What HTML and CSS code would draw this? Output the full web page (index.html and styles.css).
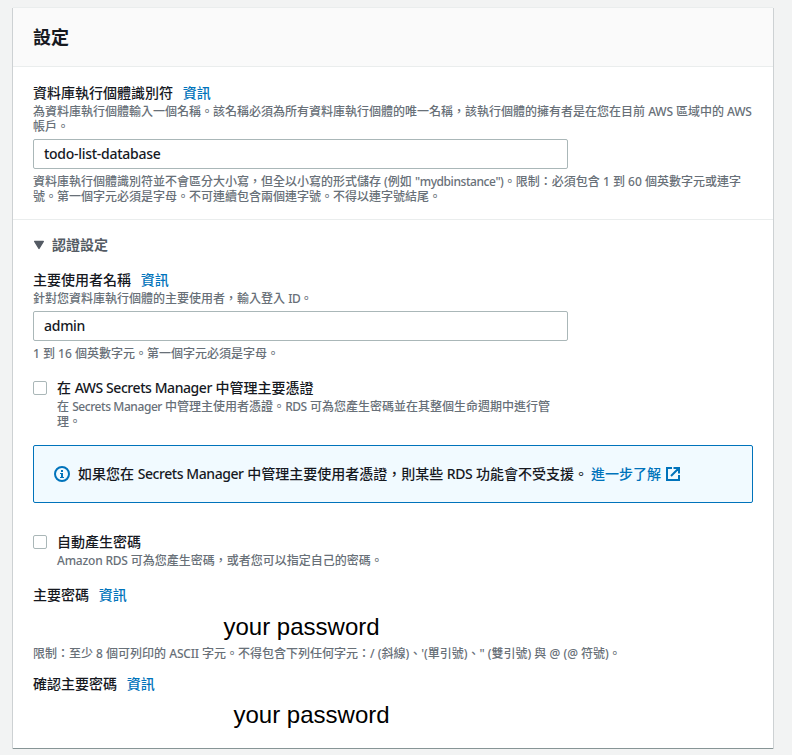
FILE: index.html
```
<!DOCTYPE html>
<html lang="zh-Hant">
<head>
<meta charset="utf-8">
<title>設定</title>
<link rel="stylesheet" href="styles.css">
</head>
<body>
<main class="card">
  <header class="card-header"><h2>設定</h2></header>

  <section class="identifier">
    <div class="label">資料庫執行個體識別符 <a class="info">資訊</a></div>
    <p class="hint">為資料庫執行個體輸入一個名稱。該名稱必須為所有資料庫執行個體的唯一名稱，該執行個體的擁有者是在您在目前 <span class="caps">AWS</span> 區域中的 <span class="caps">AWS</span><br>帳戶。</p>
    <div class="input"><span class="value">todo-list-database</span></div>
    <p class="hint">資料庫執行個體識別符並不會區分大小寫，但全以小寫的形式儲存 (例如 <span class="en">"mydbinstance"</span>)。限制：必須包含 1 到 60 個英數字元或連字<br>號。第一個字元必須是字母。不可連續包含兩個連字號。不得以連字號結尾。</p>
  </section>

  <section class="credentials">
    <h3 class="toggle"><svg width="12" height="10" viewBox="0 0 12 10"><path d="M1.7 1.4h8.6L6 8.4z" fill="#545b64" stroke="#545b64" stroke-width="1.4" stroke-linejoin="round"/></svg>認證設定</h3>

    <div class="label">主要使用者名稱 <a class="info">資訊</a></div>
    <p class="hint">針對您資料庫執行個體的主要使用者，輸入登入 <span class="en">ID</span>。</p>
    <div class="input"><span class="value">admin</span></div>
    <p class="hint">1 到 16 個英數字元。第一個字元必須是字母。</p>

    <div class="check managed">
      <span class="box"></span>
      <div>
        <div class="label">在 <span class="en">AWS Secrets Manager</span> 中管理主要憑證</div>
        <p class="hint">在 <span class="en">Secrets Manager</span> 中管理主使用者憑證。<span class="en">RDS</span> 可為您產生密碼並在其整個生命週期中進行管<br>理。</p>
      </div>
    </div>

    <div class="alert">
      <svg class="alert-icon" width="16" height="16" viewBox="0 0 16 16"><circle cx="8" cy="8" r="7" fill="none" stroke="#0073bb" stroke-width="2"/><path d="M7 4h2v2H7zM6 7h3v4h1v1H6v-1h1V8H6z" fill="#0073bb"/></svg>
      <span>如果您在 <span class="en">Secrets Manager</span> 中管理主要使用者憑證，則某些 <span class="en">RDS</span> 功能會不受支援。</span>
      <a class="more">進一步了解</a>
      <svg class="external" width="14" height="14" viewBox="0 0 14 14" fill="none" stroke="#0073bb" stroke-width="2"><path d="M6 1H1v12h12V8M7.500 1H13v5.500M12.500 1.500 5 9"/></svg>
    </div>

    <div class="check generated">
      <span class="box"></span>
      <div>
        <div class="label">自動產生密碼</div>
        <p class="hint"><span class="caps">Amazon RDS</span> 可為您產生密碼，或者您可以指定自己的密碼。</p>
      </div>
    </div>

    <div class="label">主要密碼 <a class="info">資訊</a></div>
    <div class="password first">your password</div>
    <p class="hint">限制：至少 8 個可列印的 <span class="caps">ASCII</span> 字元。不得包含下列任何字元：/ (斜線)、'(單引號)、" (雙引號) 與 @ (@ 符號)。</p>
    <div class="label confirm">確認主要密碼 <a class="info">資訊</a></div>
    <div class="password second">your password</div>
  </section>
</main>
</body>
</html>
```
FILE: styles.css
```
* { box-sizing: border-box; }
body {
  margin: 0;
  padding: 8px 18px 0 13px;
  background: #f2f3f3;
  color: #16191f;
  font: 500 14px/22px "Noto Sans", "Noto Sans CJK TC", sans-serif;
}
h2, h3, p { margin: 0; }
.card {
  width: 760px;
  height: 741px;
  background: #fff;
  border-bottom: 1px solid #879596;
  box-shadow: 0 1px 0 #dfe3e4, 1px 0 0 #cdd1d3, -1px 0 0 #cdd1d3, 0 -1px 0 #eaeded;
}
.card-header {
  height: 59px;
  padding: 18px 20px 0;
  background: #fafafa;
  border-bottom: 1px solid #eaeded;
}
h2 { font-size: 18px; line-height: 22px; font-weight: 700; }
.identifier {
  height: 153px;
  padding: 15px 20px 0;
  border-bottom: 1px solid #eaeded;
}
.credentials { padding: 14px 20px 0; }
.label { white-space: nowrap; }
.info { margin-left: 6px; color: #0073bb; }
.en { letter-spacing: -0.43px; }
.caps { letter-spacing: -0.2px; }
.value { letter-spacing: -0.28px; }
.hint {
  font-size: 12px;
  line-height: 15px;
  color: #687078;
  white-space: nowrap;
}
.input {
  width: 535px;
  height: 30px;
  margin: 5px 0;
  padding: 3px 10px;
  border: 1px solid #aab7b8;
  border-radius: 2px;
}
.toggle {
  display: flex;
  align-items: center;
  gap: 7px;
  margin-bottom: 13px;
  font-size: 14px;
  line-height: 22px;
  color: #545b64;
}
.check { display: flex; gap: 10px; }
.box {
  width: 14px;
  height: 14px;
  margin-top: 4px;
  border: 1px solid #aab7b8;
  border-radius: 2px;
}
.managed { margin-top: 16px; }
.alert {
  display: flex;
  align-items: center;
  height: 58px;
  margin: 16px 0 28px;
  padding: 0 20px;
  background: #f1faff;
  border: 1px solid #0073bb;
  border-radius: 2px;
  white-space: nowrap;
}
.alert-icon { margin-right: 8px; }
.more { margin-left: 3px; color: #0073bb; }
.external { margin-left: 5px; }
.generated { margin-bottom: 16px; }
.password {
  font: 24px/28px "Liberation Sans", Arial, sans-serif;
  color: #000;
}
.first { margin: 7px 0 5px; padding-left: 190.5px; }
.confirm { margin-top: 12px; }
.second { margin-top: 6px; padding-left: 200.5px; }
```
